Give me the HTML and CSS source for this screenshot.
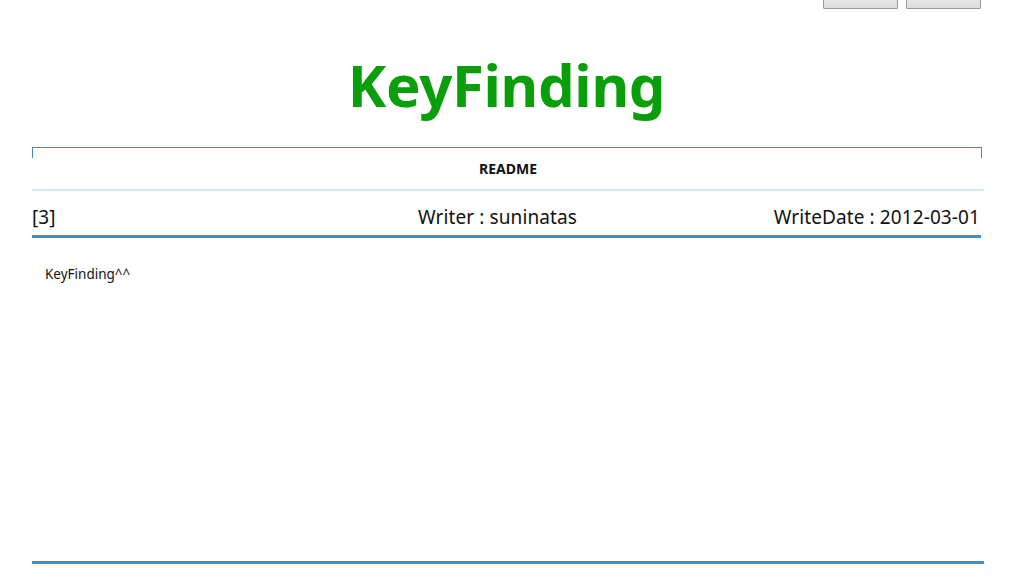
FILE: index.html
```html
<!DOCTYPE html>
<html>
<head>
<meta charset="utf-8">
<link rel="stylesheet" href="styles.css">
</head>
<body>
<div class="topbar">
  <button class="btn"></button>
  <button class="btn"></button>
</div>
<h1 class="title">KeyFinding</h1>
<div class="board">
  <div class="frame"></div>
  <div class="subject">README</div>
  <div class="info">
    <span class="num">[3]</span>
    <span class="writer">Writer : suninatas</span>
    <span class="date">WriteDate : 2012-03-01</span>
  </div>
  <div class="content">KeyFinding^^</div>
</div>
</body>
</html>
```
FILE: styles.css
```css
html, body {
  margin: 0;
  padding: 0;
  background: #fff;
}
body {
  font-family: "Noto Sans", "Open Sans", sans-serif;
  color: #111;
  width: 1023px;
}
.topbar {
  height: 8px;
  display: flex;
  justify-content: flex-end;
  gap: 8px;
  padding-right: 42px;
  overflow: visible;
}
.btn {
  width: 75px;
  height: 26px;
  margin-top: -17px;
  border: 1px solid #9a9a9a;
  border-radius: 1px;
  background: linear-gradient(#f2f2f2, #dedede);
  padding: 0;
}
.title {
  margin: 43px 0 0 0;
  height: 96px;
  text-align: center;
  color: #0a9e0a;
  font-size: 58px;
  font-weight: 700;
  line-height: 68px;
  letter-spacing: -0.3px;
  padding-right: 10px;
}
.board {
  margin-left: 32px;
  width: 952px;
}
.frame {
  height: 10px;
  border: 1px solid #3d8cd2;
  border-bottom: 0;
  margin-right: 2px;
}
.subject {
  line-height: 22px;
  text-align: center;
  font-size: 14px;
  font-weight: 700;
  color: #111;
  border-bottom: 2px solid #d3eaf5;
  box-sizing: border-box;
  height: 33px;
}
.info {
  display: grid;
  grid-template-columns: 386px 1fr auto;
  align-items: center;
  font-size: 19px;
  letter-spacing: 0.1px;
  border-bottom: 3px solid #3993cb;
  margin-right: 3px;
  padding-right: 1px;
  box-sizing: border-box;
  height: 47px;
  padding-top: 8px;
}
.content {
  padding: 27px 0 0 13px;
  box-sizing: border-box;
  font-size: 13.5px;
  border-bottom: 3px solid #3993cb;
  height: 326px;
}
```
